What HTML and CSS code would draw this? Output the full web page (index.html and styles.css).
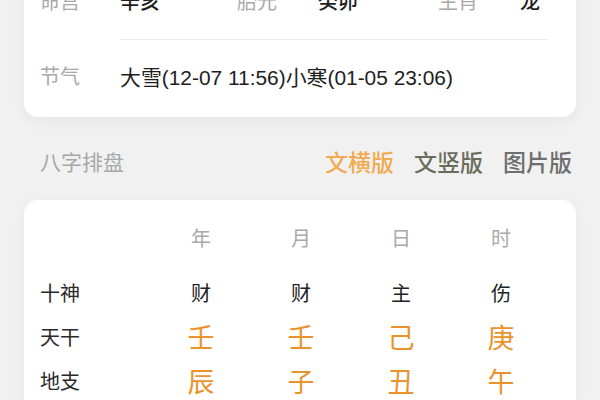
FILE: index.html
```html
<!DOCTYPE html>
<html lang="zh-CN">
<head>
<meta charset="utf-8">
<title>八字排盘</title>
<link rel="stylesheet" href="styles.css">
</head>
<body>
<div class="page">
  <section class="card info">
    <div class="info-row first">
      <span class="label">命宫</span>
      <span class="value strong">辛亥</span>
      <span class="label">胎元</span>
      <span class="value strong">癸卯</span>
      <span class="label">生肖</span>
      <span class="value strong">龙</span>
    </div>
    <div class="info-row second">
      <span class="label">节气</span>
      <span class="value wide">大雪(12-07 11:56)小寒(01-05 23:06)</span>
    </div>
  </section>

  <div class="section-head">
    <span class="section-title">八字排盘</span>
    <nav class="tabs">
      <span class="tab active">文横版</span>
      <span class="tab olive">文竖版</span>
      <span class="tab grey">图片版</span>
    </nav>
  </div>

  <section class="card bazi">
    <div class="bz-row head">
      <span class="bz-label"></span>
      <span class="bz-cell">年</span>
      <span class="bz-cell">月</span>
      <span class="bz-cell">日</span>
      <span class="bz-cell">时</span>
    </div>
    <div class="bz-row">
      <span class="bz-label">十神</span>
      <span class="bz-cell god">财</span>
      <span class="bz-cell god">财</span>
      <span class="bz-cell god">主</span>
      <span class="bz-cell god">伤</span>
    </div>
    <div class="bz-row">
      <span class="bz-label">天干</span>
      <span class="bz-cell gz">壬</span>
      <span class="bz-cell gz">壬</span>
      <span class="bz-cell gz">己</span>
      <span class="bz-cell gz">庚</span>
    </div>
    <div class="bz-row">
      <span class="bz-label">地支</span>
      <span class="bz-cell gz">辰</span>
      <span class="bz-cell gz">子</span>
      <span class="bz-cell gz">丑</span>
      <span class="bz-cell gz">午</span>
    </div>
  </section>
</div>
</body>
</html>
```

FILE: styles.css
```css
* { box-sizing: border-box; }
html, body {
  margin: 0;
  padding: 0;
  height: 100%;
  overflow: hidden;
}
body {
  background: #f1f1f1;
  font-family: "Noto Sans CJK SC", "Noto Sans", sans-serif;
  color: #222;
}
.page {
  padding: 0 24px;
}
.card {
  background: #fff;
  border-radius: 14px;
  box-shadow: 0 4px 14px rgba(0, 0, 0, 0.05);
}
.info {
  margin-top: -40px;
  padding: 0 28px 0 16px;
}
.info-row {
  display: grid;
  align-items: center;
  font-size: 20px;
}
.info-row.first {
  grid-template-columns: 80px 117px 81px 120px 82px 1fr;
  height: 80px;
  position: relative;
}
.info-row.first::after {
  content: "";
  position: absolute;
  left: 80px;
  right: 0;
  bottom: 0;
  height: 1px;
  background: #ebebeb;
}
.info-row.second {
  grid-template-columns: 80px 1fr;
  height: 77px;
  padding-bottom: 6px;
}
.label {
  color: #a9a9a9;
}
.value {
  color: #1e1e1e;
}
.value.strong {
  font-weight: 500;
}
.value.wide {
  font-family: "Liberation Sans", "Noto Sans CJK SC", sans-serif;
  font-size: 20.9px;
  white-space: nowrap;
}
.section-head {
  display: flex;
  align-items: center;
  justify-content: space-between;
  height: 83px;
  padding: 4px 4px 0 16px;
}
.section-title {
  font-size: 21px;
  color: #a8a8a8;
}
.tabs {
  display: flex;
  gap: 20px;
}
.tab {
  font-size: 23px;
  font-weight: 500;
}
.tab.active { color: #f1ab4f; }
.tab.olive { color: #6a6d5b; }
.tab.grey { color: #6e6e6e; }

.bazi {
  padding: 0 25px 10px 16px;
}
.bz-row {
  display: grid;
  grid-template-columns: 111px repeat(4, 100px);
  align-items: center;
  height: 44px;
}
.bz-row.head {
  height: 70px;
  padding-top: 4px;
}
.bz-label {
  font-size: 20px;
  color: #2a2a2a;
}
.bz-cell {
  text-align: center;
  font-size: 20px;
  color: #a9a9a9;
}
.bz-cell.god {
  color: #222;
}
.bz-cell.gz {
  font-size: 27px;
  color: #ea922c;
}
```
